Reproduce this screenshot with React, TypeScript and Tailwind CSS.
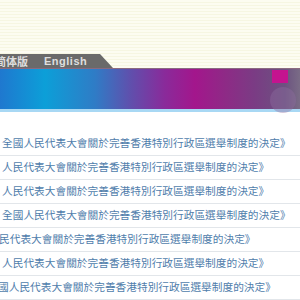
const rows = [
  { text: "全國人民代表大會關於完善香港特別行政區選舉制度的決定》", shift: "ml-[2px]" },
  { text: "人民代表大會關於完善香港特別行政區選舉制度的決定》", shift: "ml-[2px]" },
  { text: "人民代表大會關於完善香港特別行政區選舉制度的決定》", shift: "ml-[2px]" },
  { text: "全國人民代表大會關於完善香港特別行政區選舉制度的決定》", shift: "ml-[2px]" },
  { text: "民代表大會關於完善香港特別行政區選舉制度的決定》", shift: "ml-[-1px]" },
  { text: "人民代表大會關於完善香港特別行政區選舉制度的決定》", shift: "ml-[2px]" },
  { text: "國人民代表大會關於完善香港特別行政區選舉制度的決定》", shift: "ml-[-2px]" },
]

const App = () => {
  return (
    <div className="w-[300px] h-[300px] overflow-hidden bg-white font-['Noto_Sans_CJK_TC','Liberation_Sans',sans-serif]">
      {/* striped header */}
      <div className="bg-[repeating-linear-gradient(180deg,#fcfcf1_0px,#fcfcf1_2px,#f6f6e2_2px,#f6f6e2_3px)]">
        <div className="h-[54px]" />
        <div className="h-[14px] flex">
          <div className="w-[113px] bg-[#6a6a6a] [clip-path:polygon(0_0,100px_0,113px_100%,0_100%)] flex items-center text-[11px] leading-none text-[#dedede] font-bold">
            <span className="ml-[-5px] font-['Noto_Sans_CJK_SC',sans-serif]">简体版</span>
            <span className="ml-[16px] tracking-[0.5px] font-['Liberation_Sans',sans-serif]">English</span>
          </div>
        </div>
      </div>

      {/* banner */}
      <div className="h-px bg-[#8a6a80]" />
      <div className="relative h-[40px] bg-[linear-gradient(90deg,#1f78cf_0px,#0c9fd8_45px,#2f7cc6_95px,#5f50ad_130px,#8a2a9a_165px,#a3168c_195px,#8e2a86_225px,#7a3c84_255px,#6c5280_285px,#7a6c86_300px)]">
        <div className="absolute left-[272px] top-[1px] w-[16px] h-[13px] bg-[#c4148f]" />
        <div className="absolute left-[270px] top-[18px] w-[26px] h-[26px] rounded-full bg-[#8f6fa0] opacity-40" />
      </div>
      <div className="h-[3px] bg-[#a8d8f4]" />

      {/* list */}
      <div className="pt-[20px]">
        {rows.map((row, i) => (
          <div key={i} className="h-[24px] flex items-center border-b border-[#e2e6ea] overflow-hidden whitespace-nowrap">
            <span className={`${row.shift} text-[10.7px] leading-none text-[#4f7dab]`}>{row.text}</span>
          </div>
        ))}
      </div>
    </div>
  )
}

export default App
